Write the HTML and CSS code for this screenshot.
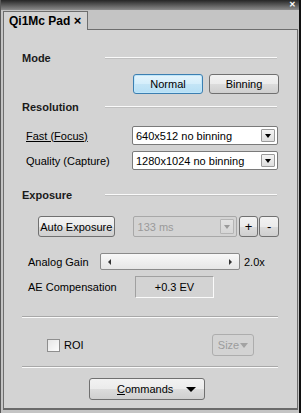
FILE: index.html
```html
<!DOCTYPE html>
<html lang="en">
<head>
  <meta charset="UTF-8">
  <title>Qi1Mc Pad</title>
  <link rel="stylesheet" href="styles.css">
</head>
<body>
<div class="win">
  <!-- title bar -->
  <div class="titlebar"><span class="close">&#x2715;</span></div>
  <!-- tabs -->
  <div class="tabs">
    <div class="tab">Qi1Mc Pad <span class="x">&times;</span></div>
  </div>
  <div class="panel">
    <div class="head"><span class="label">Mode</span><span class="rule"></span></div>
    <div class="mode-row">
      <button class="btn btn-on">Normal</button>
      <button class="btn">Binning</button>
    </div>

    <div class="head head-res"><span class="label">Resolution</span><span class="rule"></span></div>
    <div class="field field-fast">
      <span class="flabel"><u>Fast (Focus)</u></span>
      <div class="select"><span>640x512 no binning</span><i class="drop"></i></div>
    </div>
    <div class="field field-quality">
      <span class="flabel">Quality (Capture)</span>
      <div class="select"><span>1280x1024 no binning</span><i class="drop"></i></div>
    </div>

    <div class="head head-exp"><span class="label">Exposure</span><span class="rule"></span></div>
    <div class="exp-row">
      <button class="btn btn-auto">Auto Exposure</button>
      <div class="select select-off"><span>133 ms</span><i class="drop"></i></div>
      <button class="btn btn-sm">+</button>
      <button class="btn btn-sm">-</button>
    </div>
    <div class="gain-row">
      <span class="glabel">Analog Gain</span>
      <div class="slider"><i class="tri tri-l"></i><i class="tri tri-r"></i></div>
      <span class="gval">2.0x</span>
    </div>
    <div class="ae-row">
      <span class="glabel">AE Compensation</span>
      <div class="aebox">+0.3 EV</div>
    </div>

    <div class="sep sep-1"></div>
    <div class="roi-row">
      <span class="check"></span><span class="roi">ROI</span>
      <button class="btn btn-size">Size<i class="tri-d"></i></button>
    </div>
    <div class="sep sep-2"></div>
    <div class="cmd-row">
      <button class="btn btn-cmd"><span><u>C</u>ommands</span><i class="tri-d tri-dark"></i></button>
    </div>
  </div>
</div>
</body>
</html>
```

FILE: styles.css
```css
* {
  padding: 0;
  margin: 0;
  box-sizing: border-box;
}

body {
  width: 301px;
  height: 413px;
  overflow: hidden;
  background: #c4c4c4;
  font-family: "Liberation Sans", Arial, sans-serif;
  font-size: 11px;
  color: #000;
}

.win {
  height: 413px;
  border-left: 1px solid #5a5a5a;
  border-right: 2px solid #111;
  background: #c4c4c4;
}

.titlebar {
  height: 10px;
  background: linear-gradient(#262626, #8c8c8c);
  display: flex;
  justify-content: flex-end;
  padding-right: 3px;
}

.close {
  color: #fff;
  font-size: 8px;
  font-weight: bold;
  line-height: 10px;
}

.tabs {
  height: 19px;
  padding: 1px 0 0 2px;
  display: flex;
}

.tab {
  width: 85px;
  height: 19px;
  background: #d3d3d3;
  border: 1px solid #6e6e6e;
  border-bottom: 0;
  font-weight: bold;
  font-size: 12px;
  line-height: 17px;
  padding-left: 5px;
  position: relative;
  z-index: 1;
}

.tab .x {
  font-size: 13px;
}

.panel {
  margin-left: 2px;
  width: 295px;
  height: 381px;
  background: #d3d3d3;
  border: 1px solid #6e6e6e;
  border-bottom: 2px solid #6a6a6a;
  padding: 0 18px;
}

.head {
  display: flex;
  align-items: center;
  height: 16px;
  margin-top: 20px;
}

.head .label {
  width: 83px;
  font-weight: bold;
  font-size: 11px;
  color: #1a1a1a;
}

.head .rule {
  flex: 1;
  height: 2px;
  border-top: 1px solid #fafafa;
  border-bottom: 1px solid #c0c0c0;
  margin-right: 2px;
}

.head-res {
  margin-top: 5px;
}

.head-exp {
  margin-top: 17px;
}

.btn {
  font-family: "Liberation Sans", Arial, sans-serif;
  font-size: 11px;
  color: #000;
  white-space: nowrap;
  border: 1px solid #707070;
  border-radius: 3px;
  background: linear-gradient(#f2f2f2 0%, #ebebeb 50%, #dcdcdc 51%, #cfcfcf 100%);
}

.mode-row {
  display: flex;
  justify-content: flex-end;
  gap: 6px;
  margin-top: 8px;
}

.mode-row .btn {
  width: 70px;
  height: 20px;
}

.btn-on {
  border-color: #3c7fb1;
  background: linear-gradient(#e5f4fc 0%, #d4eefb 50%, #c4e5f6 51%, #b6dff5 100%);
  box-shadow: inset 0 0 0 1px #bfe6fa;
}

.field {
  display: flex;
  align-items: center;
  padding-left: 4px;
  height: 19px;
}

.field-fast {
  margin-top: 11px;
}

.field-quality {
  margin-top: 6px;
}

.flabel {
  width: 106px;
}

.select {
  width: 146px;
  height: 19px;
  background: #fff;
  border: 1px solid #7a7a7a;
  border-radius: 2px;
  display: flex;
  align-items: center;
  justify-content: space-between;
  padding: 0 2px 0 3px;
}

.drop {
  width: 14px;
  height: 13px;
  border: 1px solid #9a9a9a;
  border-radius: 1px;
  background: linear-gradient(#f4f4f4, #dedede);
  position: relative;
}

.drop::after {
  content: "";
  position: absolute;
  left: 3px;
  top: 4px;
  border-left: 3.5px solid transparent;
  border-right: 3.5px solid transparent;
  border-top: 4px solid #000;
}

.exp-row {
  display: flex;
  align-items: center;
  margin-top: 13px;
  padding-left: 16px;
  height: 21px;
}

.btn-auto {
  width: 78px;
  height: 21px;
}

.select-off {
  width: 106px;
  height: 21px;
  margin-left: 18px;
  background: #d3d3d3;
  border-color: #a8a8a8;
  color: #9a9a9a;
  padding-left: 4px;
}

.select-off .drop {
  height: 15px;
  border-color: #b5b5b5;
  background: linear-gradient(#e2e2e2, #d6d6d6);
}

.select-off .drop::after {
  top: 5px;
  border-top-color: #9a9a9a;
}

.btn-sm {
  width: 20px;
  height: 21px;
  margin-left: 2px;
  font-size: 13px;
}

.btn-sm + .btn-sm {
  margin-left: 1px;
}

.gain-row {
  display: flex;
  align-items: center;
  margin-top: 16px;
  padding-left: 6px;
  height: 17px;
}

.glabel {
  width: 72px;
}

.slider {
  width: 140px;
  height: 17px;
  border: 1px solid #8a8a8a;
  border-radius: 2px;
  background: linear-gradient(#f8f8f8, #e6e6e6);
  display: flex;
  align-items: center;
  justify-content: space-between;
  padding: 0 7px;
}

.tri {
  width: 0;
  height: 0;
  border-top: 3.5px solid transparent;
  border-bottom: 3.5px solid transparent;
}

.tri-l {
  border-right: 3px solid #333;
}

.tri-r {
  border-left: 3px solid #333;
}

.gval {
  margin-left: 4px;
}

.ae-row {
  display: flex;
  align-items: center;
  margin-top: 6px;
  padding-left: 6px;
  height: 22px;
}

.ae-row .glabel {
  width: 107px;
}

.aebox {
  width: 79px;
  height: 22px;
  border: 1px solid #a0a0a0;
  border-bottom-color: #fafafa;
  border-right-color: #fafafa;
  text-align: center;
  line-height: 20px;
}

.sep {
  height: 2px;
  border-top: 1px solid #a8a8a8;
  border-bottom: 1px solid #fafafa;
  margin-right: 1px;
}

.sep-1 {
  margin-top: 18px;
}

.sep-2 {
  margin-top: 10px;
}

.roi-row {
  display: flex;
  align-items: center;
  height: 22px;
  margin-top: 16px;
  padding-left: 25px;
}

.check {
  width: 13px;
  height: 13px;
  border: 1px solid #8e8e8e;
  background: linear-gradient(135deg, #e6e6e6, #fcfcfc);
}

.roi {
  margin-left: 4px;
  flex: 1;
}

.btn-size {
  width: 42px;
  height: 22px;
  margin-right: 25px;
  border-color: #adadad;
  background: #d3d3d3;
  color: #9c9c9c;
  display: flex;
  align-items: center;
  justify-content: center;
}

.tri-d {
  display: inline-block;
  width: 0;
  height: 0;
  border-left: 4px solid transparent;
  border-right: 4px solid transparent;
  border-top: 5px solid #a3a3a3;
  margin-left: 1px;
}

.cmd-row {
  display: flex;
  margin-top: 10px;
  padding-left: 67px;
}

.btn-cmd {
  width: 116px;
  height: 22px;
  display: flex;
  align-items: center;
  justify-content: space-between;
  padding: 0 8px 0 27px;
}

.tri-dark {
  border-top-color: #000;
  border-left-width: 5px;
  border-right-width: 5px;
}
```
